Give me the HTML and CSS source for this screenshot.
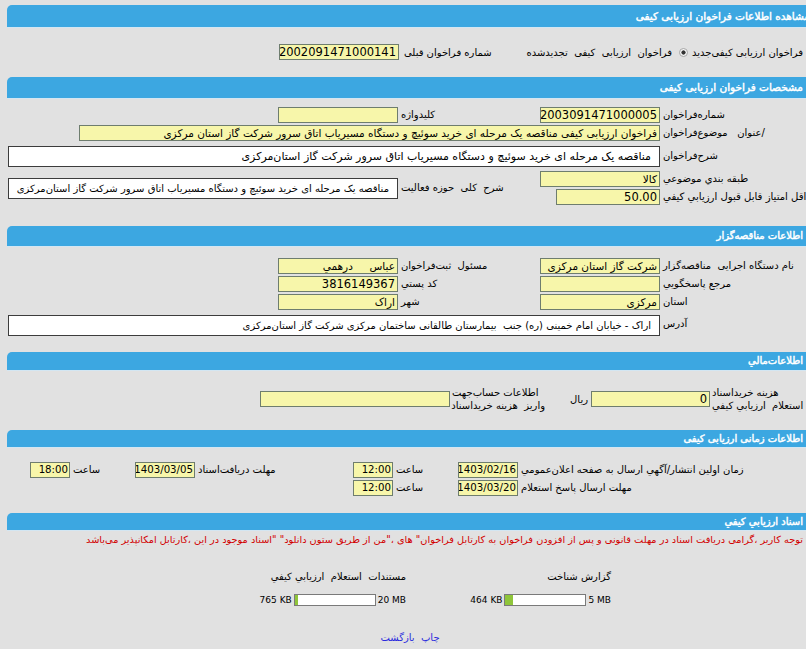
FILE: index.html
```html
<!DOCTYPE html>
<html lang="fa">
<head>
<meta charset="utf-8">
<title>مشاهده اطلاعات فراخوان ارزیابی کیفی</title>
<link rel="stylesheet" href="styles.css">
</head>
<body>
<div class="page">
  <div class="hdr h1">مشاهده اطلاعات فراخوان ارزیابی کیفی</div>
  <div class="sec sec1">
    <div class="r1">
      <span class="r1-a">فراخوان ارزیابی کیفی‌جدید</span>
      <span class="radio"></span>
      <span class="r1-b">فراخوان  ارزیابی  کیفی  تجدیدشده</span>
      <span class="r1-c"><span class="lbl-in">شماره فراخوان قبلی</span><span class="fld num w120">2002091471000141</span></span>
    </div>
  </div>

  <div class="hdr h2">مشخصات فراخوان ارزیابی کیفی</div>
  <div class="sec sec2 grid">
    <div class="lbl c1">شماره‌فراخوان</div>
    <div class="fld num">2003091471000005</div>
    <div class="lbl">کلیدواژه</div>
    <div class="fld"></div>

    <div class="lbl c1">/عنوان   موضوع‌فراخوان</div>
    <div class="fld span4 wlong">فراخوان ارزیابی کیفی مناقصه یک مرحله ای خرید سوئیچ و دستگاه مسیریاب اتاق سرور شرکت گاز استان مرکزی</div>

    <div class="lbl c1">شرح‌فراخوان</div>
    <div class="box box-lg span4">مناقصه یک مرحله ای خرید سوئیچ و دستگاه مسیریاب اتاق سرور شرکت گاز استان‌مرکزی</div>

    <div class="lbl c1">طبقه بندي موضوعي</div>
    <div class="fld">کالا</div>
    <div class="lbl rows2">شرح  کلی  حوزه فعالیت</div>
    <div class="box span2 rows2">مناقصه یک مرحله ای خرید سوئیچ و دستگاه مسیریاب اتاق سرور شرکت گاز استان‌مرکزی</div>

    <div class="lbl c1 lbl-sm">حداقل امتیاز قابل قبول ارزیابي کیفي</div>
    <div class="fld num w104">50.00</div>
  </div>

  <div class="hdr h3">اطلاعات مناقصه‌گزار</div>
  <div class="sec sec3 grid">
    <div class="lbl c1">نام دستگاه اجرایی  مناقصه‌گزار</div>
    <div class="fld">شرکت گاز استان مرکزی</div>
    <div class="lbl">مسئول  ثبت‌فراخوان</div>
    <div class="fld">عباس     درهمي</div>

    <div class="lbl c1">مرجع پاسخگویي</div>
    <div class="fld"></div>
    <div class="lbl">کد پستي</div>
    <div class="fld num">3816149367</div>

    <div class="lbl c1">استان</div>
    <div class="fld">مرکزی</div>
    <div class="lbl">شهر</div>
    <div class="fld">اراک</div>

    <div class="lbl c1">آدرس</div>
    <div class="box span4 addr">اراک - خیابان امام خمینی (ره) جنب  بیمارستان طالقانی ساختمان مرکزی شرکت گاز استان‌مرکزی</div>
  </div>

  <div class="hdr h4">اطلاعات‌مالي</div>
  <div class="sec sec4">
    <div class="r4">
      <div class="lbl2 s4a">هزینه خرید‌اسناد<br>استعلام  ارزیابي کیفي</div>
      <div class="fld num w119">0</div>
      <div class="rial">ریال</div>
      <div class="lbl2 s4b">اطلاعات حساب‌جهت<br>واریز  هزینه خرید‌اسناد</div>
      <div class="fld w190"></div>
    </div>
  </div>

  <div class="hdr h5">اطلاعات  زمانی  ارزیابی کیفی</div>
  <div class="sec sec5 grid5">
    <div class="lbl c1">زمان اولین انتشار/آگهي ارسال به صفحه اعلان‌عمومي</div>
    <div class="fld dt">1403/02/16</div>
    <div class="lbl">ساعت</div>
    <div class="fld dt">12:00</div>
    <div class="lbl">مهلت دریافت‌اسناد</div>
    <div class="fld dt">1403/03/05</div>
    <div class="lbl">ساعت</div>
    <div class="fld dt">18:00</div>

    <div class="lbl c1">مهلت ارسال پاسخ استعلام</div>
    <div class="fld dt">1403/03/20</div>
    <div class="lbl">ساعت</div>
    <div class="fld dt">12:00</div>
  </div>

  <div class="hdr h6">اسناد ارزیابي کیفي</div>
  <div class="sec sec6">
    <div class="notice">توجه کاربر ،گرامی دریافت اسناد در مهلت قانونی و پس از افزودن فراخوان به کارتابل فراخوان" های ،"من از طریق ستون دانلود" "اسناد موجود در این ،کارتابل امکانپذیر می‌باشد</div>
    <div class="docs">
      <div class="doc">
        <div class="doc-title">گزارش شناخت</div>
        <div class="doc-bar">
          <span class="size">5 MB</span>
          <span class="bar"><span class="fill" style="width:9%"></span></span>
          <span class="size">464 KB</span>
        </div>
      </div>
      <div class="doc">
        <div class="doc-title">مستندات  استعلام  ارزیابي کیفي</div>
        <div class="doc-bar">
          <span class="size">20 MB</span>
          <span class="bar"><span class="fill" style="width:3.7%"></span></span>
          <span class="size">765 KB</span>
        </div>
      </div>
    </div>
    <div class="links"><a href="#" class="lnk">چاپ</a>  <a href="#" class="lnk">بازگشت</a></div>
  </div>
</div>
</body>
</html>
```

FILE: styles.css
```css
html, body {
  margin: 0;
  padding: 0;
  overflow: hidden;
  background: #e1e1e1;
}
body {
  font-family: "DejaVu Sans", sans-serif;
  font-size: 10px;
  color: #000;
}
.page {
  width: 806px;
  margin-left: 7px;
  padding-top: 5px;
  direction: rtl;
}
.hdr {
  background: #3ca7e1;
  color: #fff;
  font-size: 10px;
  -webkit-text-stroke: 0.45px #fff;
  border-top-left-radius: 5px;
  padding-right: 10px;
  white-space: nowrap;
  overflow: hidden;
  box-shadow: 0 1px 0 #d3e6f2;
}
.h1 { height: 22px; line-height: 22px; padding-right: 3px; font-size: 10.5px; }
.h2 { height: 21px; line-height: 21px; font-size: 10.5px; }
.h3 { height: 20px; line-height: 20px; }
.h4 { height: 18px; line-height: 18px; }
.h5 { height: 17px; line-height: 17px; }
.h6 { height: 17px; line-height: 17px; }

.sec {
  padding-left: 1px;
  padding-right: 1px;
}

/* fields */
.fld {
  box-sizing: border-box;
  height: 16px;
  line-height: 14px;
  background: #f7f6aa;
  border: 1px solid #6e7d6e;
  padding: 0 2px;
  font-size: 10.5px;
  white-space: pre;
  overflow: hidden;
  align-self: center;
}
.num { font-size: 11.5px; }
.dt { font-size: 10.2px; padding: 0 1px; }
.box {
  box-sizing: border-box;
  height: 21px;
  line-height: 19px;
  background: #fff;
  border: 1px solid #3c3c3c;
  padding: 0 8px;
  white-space: pre;
  overflow: hidden;
  align-self: center;
}
.box-lg { font-size: 11px; }
.lbl {
  white-space: pre;
  padding-left: 3px;
  line-height: 14px;
  align-self: center;
  justify-self: end;
}
.lbl-sm { font-size: 10.1px; }

/* section 1 */
.sec1 { padding-top: 16px; padding-bottom: 16px; }
.r1 {
  display: flex;
  align-items: center;
  height: 18px;
  width: 533px;
}
.r1-a { width: 120px; text-align: left; white-space: pre; }
.radio {
  box-sizing: border-box;
  width: 9px;
  height: 9px;
  margin-right: 4px;
  border-radius: 50%;
  border: 1px solid #a8a8a8;
  background: radial-gradient(circle, #333 0 1.8px, #f4f4f4 2.4px);
}
.r1-b { margin-right: 7px; white-space: pre; }
.r1-c { margin-right: auto; display: flex; align-items: center; }
.lbl-in { margin-left: 5px; white-space: pre; }
.w120 { width: 120px; }

/* grids */
.grid {
  display: grid;
  grid-template-columns: 152px 120px 142px 120px 1fr;
}
.c1 { grid-column-start: 1; }
.span4 { grid-column: span 4; }
.span2 { grid-column: span 2; }
.rows2 { grid-row: span 2; }
.wlong { width: 581px; justify-self: start; }
.w104 { width: 104px; justify-self: start; }

.sec2 {
  padding-top: 8px;
  padding-bottom: 20px;
  grid-template-rows: 18px 18px 28px 18px 18px;
}
.sec3 {
  padding-top: 11px;
  padding-bottom: 16px;
  grid-template-rows: 18px 18px 18px 25px;
}
.addr { align-self: end; }

/* section 4 */
.sec4 { padding-top: 15px; padding-bottom: 17px; }
.r4 {
  display: flex;
  align-items: center;
  height: 28px;
}
.lbl2 {
  text-align: left;
  line-height: 13px;
  white-space: pre;
  padding-left: 2px;
  box-sizing: border-box;
}
.s4a { width: 102px; }
.s4b { width: 95px; }
.w119 { width: 119px; }
.w190 { width: 190px; }
.rial { width: 46px; padding-right: 3px; box-sizing: border-box; }

/* section 5 */
.sec5 {
  padding-top: 14px;
  padding-bottom: 16px;
  display: grid;
  grid-template-columns: 294px 60px 65px 40px 158px 60px 65px 40px 1fr;
  grid-template-rows: 18px 18px;
}

/* section 6 */
.sec6 { padding-top: 3px; }
.notice {
  color: #d20000;
  font-size: 9.75px;
  line-height: 14px;
  padding-right: 9px;
  white-space: pre;
}
.docs {
  display: grid;
  grid-template-columns: 205px 205px;
  padding-right: 201px;
  margin-top: 23px;
}
.doc-title { white-space: pre; line-height: 14px; }
.doc-bar {
  display: flex;
  align-items: center;
  gap: 2px;
  margin-top: 10px;
  height: 12px;
}
.size {
  direction: ltr;
  unicode-bidi: isolate;
  white-space: nowrap;
  font-size: 9px;
}
.bar {
  box-sizing: border-box;
  width: 82px;
  height: 12px;
  background: #fff;
  border: 1px solid #7a7a7a;
  direction: ltr;
  display: flex;
}
.fill {
  height: 100%;
  background: #8fc53a;
}
.links {
  text-align: center;
  margin-top: 25px;
  line-height: 14px;
  white-space: pre;
}
.lnk {
  color: #2b2bdd;
  text-decoration: none;
}
```
